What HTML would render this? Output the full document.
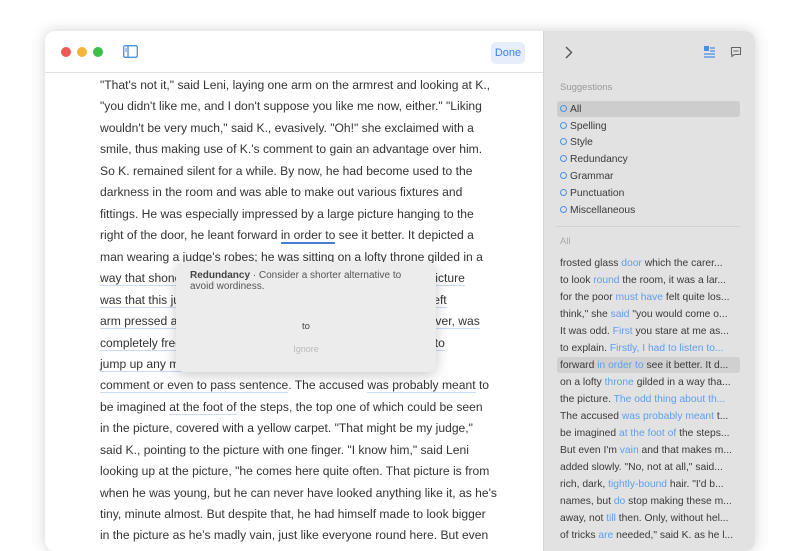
<!DOCTYPE html>
<html><head><meta charset="utf-8"><style>
*{margin:0;padding:0;box-sizing:border-box}
body{width:800px;height:539px;background:#fff;font-family:"Liberation Sans",sans-serif;position:relative;overflow:hidden}
.win{position:absolute;left:45px;top:31px;width:710px;height:520px;border-radius:10px;box-shadow:0 0 14px rgba(0,0,0,.18);overflow:hidden;background:#fff}
.side{position:absolute;left:498px;top:0;width:212px;height:100%;background:#e2e2e2;border-left:1px solid #d4d4d4}
.tb{position:absolute;left:0;top:0;width:498px;height:42px;border-bottom:1px solid #e2e2e2}
.dot{position:absolute;top:16px;width:10px;height:10px;border-radius:50%}
.done{position:absolute;left:446px;top:11px;width:34px;height:22px;background:#e6eefb;border-radius:5px;color:#3b82f6;font-size:11px;text-align:center;line-height:22px}
.l{position:absolute;left:100px;font-size:12.1px;color:#333;white-space:nowrap;line-height:16px;margin-top:-8px}
.u{border-bottom:1.5px solid #c9dbf5}
.us{border-bottom:2px solid #4a7fd6}
.pop{position:absolute;left:176px;top:262px;width:260px;height:110px;background:#ececec;border-radius:8px;box-shadow:0 3px 14px rgba(0,0,0,.22)}
.s{position:absolute;font-size:10.3px;color:#3a3a3a;white-space:nowrap;left:560px;line-height:13px;margin-top:-6px}
.s b{font-weight:normal;color:#5d9ef0}
.c{display:inline-block;width:7px;height:7px;border:1.3px solid #4a8fe6;border-radius:50%;margin-right:3px;vertical-align:0px}
</style></head><body>
<div class="win">
<div class="tb">
<div class="dot" style="left:16px;background:#ee5a52"></div>
<div class="dot" style="left:32px;background:#f5b53a"></div>
<div class="dot" style="left:48px;background:#3ebf4a"></div>
<svg style="position:absolute;left:78px;top:14px" width="15" height="13" viewBox="0 0 15 13"><rect x="0.7" y="0.7" width="13.6" height="11.6" rx="1.5" fill="none" stroke="#4a8fe6" stroke-width="1.3"/><line x1="5" y1="1" x2="5" y2="12" stroke="#4a8fe6" stroke-width="1.3"/><line x1="2" y1="4" x2="4" y2="4" stroke="#4a8fe6"/><line x1="2" y1="6" x2="4" y2="6" stroke="#4a8fe6"/></svg>
<div class="done">Done</div>
</div>
<div class="side">
<svg style="position:absolute;left:20px;top:15px" width="9" height="13" viewBox="0 0 9 13"><path d="M2 1l5.5 5.5L2 12" fill="none" stroke="#555" stroke-width="1.4"/></svg>
<svg style="position:absolute;left:160px;top:15px" width="12" height="12" viewBox="0 0 12 12"><rect x="0" y="0" width="5" height="5" fill="#4a8fe6"/><g stroke="#4a8fe6" stroke-width="1.2"><line x1="6" y1="2" x2="11" y2="2"/><line x1="6" y1="5" x2="11" y2="5"/><line x1="0" y1="8" x2="11" y2="8"/><line x1="0" y1="11" x2="11" y2="11"/></g></svg>
<svg style="position:absolute;left:186px;top:15px" width="12" height="12" viewBox="0 0 12 12"><path d="M1.5 1.5h9v7h-6l-2.5 2v-2h-0.5z" fill="none" stroke="#666" stroke-width="1.1"/><line x1="3.5" y1="5" x2="8.5" y2="5" stroke="#666"/></svg>
</div>
</div>
<div style="position:absolute;left:557px;top:101px;width:183px;height:16px;background:#cdcdcd;border-radius:3px"></div>
<div style="position:absolute;left:556px;top:226px;width:184px;height:1px;background:#d2d2d2"></div>
<div style="position:absolute;left:557px;top:357px;width:183px;height:16px;background:#d0d0d0;border-radius:3px"></div>
<div class="s" style="top:87px;color:#999;font-size:9.5px">Suggestions</div>
<div class="s" style="top:109px"><span class="c"></span>All</div>
<div class="s" style="top:126px"><span class="c"></span>Spelling</div>
<div class="s" style="top:142px"><span class="c"></span>Style</div>
<div class="s" style="top:159px"><span class="c"></span>Redundancy</div>
<div class="s" style="top:176px"><span class="c"></span>Grammar</div>
<div class="s" style="top:193px"><span class="c"></span>Punctuation</div>
<div class="s" style="top:210px"><span class="c"></span>Miscellaneous</div>
<div class="s" style="top:241px;color:#aaa;font-size:9.5px">All</div>
<div class="s" style="top:263px">frosted glass <b>door</b> which the carer...</div>
<div class="s" style="top:280px">to look <b>round</b> the room, it was a lar...</div>
<div class="s" style="top:297px">for the poor <b>must have</b> felt quite los...</div>
<div class="s" style="top:314px">think," she <b>said</b> "you would come o...</div>
<div class="s" style="top:331px">It was odd. <b>First</b> you stare at me as...</div>
<div class="s" style="top:348px">to explain. <b>Firstly, I had to listen to...</b></div>
<div class="s" style="top:365px">forward <b>in order to</b> see it better. It d...</div>
<div class="s" style="top:382px">on a lofty <b>throne</b> gilded in a way tha...</div>
<div class="s" style="top:399px">the picture. <b>The odd thing about th...</b></div>
<div class="s" style="top:416px">The accused <b>was probably meant</b> t...</div>
<div class="s" style="top:433px">be imagined <b>at the foot of</b> the steps...</div>
<div class="s" style="top:450px">But even I'm <b>vain</b> and that makes m...</div>
<div class="s" style="top:467px">added slowly. "No, not at all," said...</div>
<div class="s" style="top:484px">rich, dark, <b>tightly-bound</b> hair. "I'd b...</div>
<div class="s" style="top:501px">names, but <b>do</b> stop making these m...</div>
<div class="s" style="top:518px">away, not <b>till</b> then. Only, without hel...</div>
<div class="s" style="top:535px">of tricks <b>are</b> needed," said K. as he l...</div>

<div class="l" style="top:85px">"That's not it," said Leni, laying one arm on the armrest and looking at K.,</div>
<div class="l" style="top:106px">"you didn't like me, and I don't suppose you like me now, either." "Liking</div>
<div class="l" style="top:128px">wouldn't be very much," said K., evasively. "Oh!" she exclaimed with a</div>
<div class="l" style="top:149px">smile, thus making use of K.'s comment to gain an advantage over him.</div>
<div class="l" style="top:171px">So K. remained silent for a while. By now, he had become used to the</div>
<div class="l" style="top:192px">darkness in the room and was able to make out various fixtures and</div>
<div class="l" style="top:214px">fittings. He was especially impressed by a large picture hanging to the</div>
<div class="l" style="top:235px">right of the door, he leant forward <span class="us">in order to</span> see it better. It depicted a</div>
<div class="l" style="top:257px">man wearing a judge's robes; he was sitting on a lofty throne gilded in a</div>
<div class="l" style="top:278px"><span class="u">way that shone out from the picture. The odd thing about this picture</span></div>
<div class="l" style="top:300px"><span class="u">was that this judge was not sitting there in dignity, but had his left</span></div>
<div class="l" style="top:321px"><span class="u">arm pressed against the back and armrest, his right arm, however, was</span></div>
<div class="l" style="top:343px"><span class="u">completely free except for his hand on the armrest, as if about to</span></div>
<div class="l" style="top:364px"><span class="u">jump up any moment with an angry gesture to make some</span></div>
<div class="l" style="top:385px"><span class="u">comment or even to pass sentence</span>. The accused <span class="u">was probably meant</span> to</div>
<div class="l" style="top:407px">be imagined <span class="u">at the foot of</span> the steps, the top one of which could be seen</div>
<div class="l" style="top:428px">in the picture, covered with a yellow carpet. "That might be my judge,"</div>
<div class="l" style="top:450px">said K., pointing to the picture with one finger. "I know him," said Leni</div>
<div class="l" style="top:471px">looking up at the picture, "he comes here quite often. That picture is from</div>
<div class="l" style="top:493px">when he was young, but he can never have looked anything like it, as he's</div>
<div class="l" style="top:514px">tiny, minute almost. But despite that, he had himself made to look bigger</div>
<div class="l" style="top:535px">in the picture as he's madly vain, just like everyone round here. But even</div>

<div class="pop">
<div style="position:absolute;left:14px;top:8px;font-size:10px;color:#555;line-height:11px;width:235px"><b style="color:#444">Redundancy</b> · Consider a shorter alternative to avoid wordiness.</div>
<div style="position:absolute;left:0;width:260px;top:59px;text-align:center;font-size:9.5px;color:#444">to</div>
<div style="position:absolute;left:0;width:260px;top:82px;text-align:center;font-size:9px;color:#bbb">Ignore</div>
</div>
</body></html>
